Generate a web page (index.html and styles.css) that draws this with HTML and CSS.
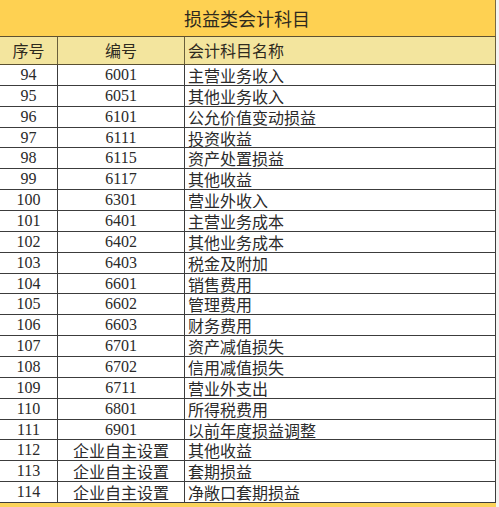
FILE: index.html
```html
<!DOCTYPE html>
<html lang="zh">
<head>
<meta charset="utf-8">
<title>损益类会计科目</title>
<link rel="stylesheet" href="styles.css">
</head>
<body>
<div class="sheet">
  <div class="title">损益类会计科目</div>
  <div class="grid">
    <div class="row head"><div class="c1">序号</div><div class="c2">编号</div><div class="c3">会计科目名称</div></div>
    <div class="row"><div class="c1 num">94</div><div class="c2 num">6001</div><div class="c3">主营业务收入</div></div>
    <div class="row"><div class="c1 num">95</div><div class="c2 num">6051</div><div class="c3">其他业务收入</div></div>
    <div class="row"><div class="c1 num">96</div><div class="c2 num">6101</div><div class="c3">公允价值变动损益</div></div>
    <div class="row"><div class="c1 num">97</div><div class="c2 num">6111</div><div class="c3">投资收益</div></div>
    <div class="row"><div class="c1 num">98</div><div class="c2 num">6115</div><div class="c3">资产处置损益</div></div>
    <div class="row"><div class="c1 num">99</div><div class="c2 num">6117</div><div class="c3">其他收益</div></div>
    <div class="row"><div class="c1 num">100</div><div class="c2 num">6301</div><div class="c3">营业外收入</div></div>
    <div class="row"><div class="c1 num">101</div><div class="c2 num">6401</div><div class="c3">主营业务成本</div></div>
    <div class="row"><div class="c1 num">102</div><div class="c2 num">6402</div><div class="c3">其他业务成本</div></div>
    <div class="row"><div class="c1 num">103</div><div class="c2 num">6403</div><div class="c3">税金及附加</div></div>
    <div class="row"><div class="c1 num">104</div><div class="c2 num">6601</div><div class="c3">销售费用</div></div>
    <div class="row"><div class="c1 num">105</div><div class="c2 num">6602</div><div class="c3">管理费用</div></div>
    <div class="row"><div class="c1 num">106</div><div class="c2 num">6603</div><div class="c3">财务费用</div></div>
    <div class="row"><div class="c1 num">107</div><div class="c2 num">6701</div><div class="c3">资产减值损失</div></div>
    <div class="row"><div class="c1 num">108</div><div class="c2 num">6702</div><div class="c3">信用减值损失</div></div>
    <div class="row"><div class="c1 num">109</div><div class="c2 num">6711</div><div class="c3">营业外支出</div></div>
    <div class="row"><div class="c1 num">110</div><div class="c2 num">6801</div><div class="c3">所得税费用</div></div>
    <div class="row"><div class="c1 num">111</div><div class="c2 num">6901</div><div class="c3">以前年度损益调整</div></div>
    <div class="row"><div class="c1 num">112</div><div class="c2">企业自主设置</div><div class="c3">其他收益</div></div>
    <div class="row"><div class="c1 num">113</div><div class="c2">企业自主设置</div><div class="c3">套期损益</div></div>
    <div class="row"><div class="c1 num">114</div><div class="c2">企业自主设置</div><div class="c3">净敞口套期损益</div></div>
  </div>
  <div class="foot"></div>
</div>
</body>
</html>
```

FILE: styles.css
```css
html, body {
  margin: 0;
  padding: 0;
  background: #f4f4f2;
}
body {
  width: 499px;
  height: 507px;
  overflow: hidden;
  font-family: "Noto Sans CJK SC", "Liberation Sans", sans-serif;
  color: #2a2a2a;
}
.sheet {
  width: 496px;
  background: #fff;
}
.title {
  box-sizing: border-box;
  height: 37px;
  background: #fed152;
  border-bottom: 1px solid #5e5030;
  border-right: 1px solid #7a6a40;
  font-size: 18px;
  line-height: 36px;
  padding-left: 184px;
  color: #2e2a1e;
}
.grid {
  display: flex;
  flex-direction: column;
}
.row {
  box-sizing: border-box;
  height: 20.86px;
  display: grid;
  grid-template-columns: 58px 127px 311px;
  border-bottom: 1px solid #3c3c3c;
  font-size: 16px;
  line-height: 20px;
}
.row.head {
  height: 28px;
  background: #f3e59e;
  border-bottom: 1px solid #5a5030;
  line-height: 27px;
  color: #2e2a1e;
}
.row > div {
  box-sizing: border-box;
  border-right: 1px solid #3c3c3c;
  white-space: nowrap;
}
.row.head > div {
  border-right-color: #6a5f3a;
}
.c1, .c2 {
  text-align: center;
}
.c3 {
  padding-left: 3px;
}
.num {
  font-family: "Liberation Serif", serif;
  font-size: 16px;
}
.foot {
  height: 6px;
  background: #fbd35a;
}
```
